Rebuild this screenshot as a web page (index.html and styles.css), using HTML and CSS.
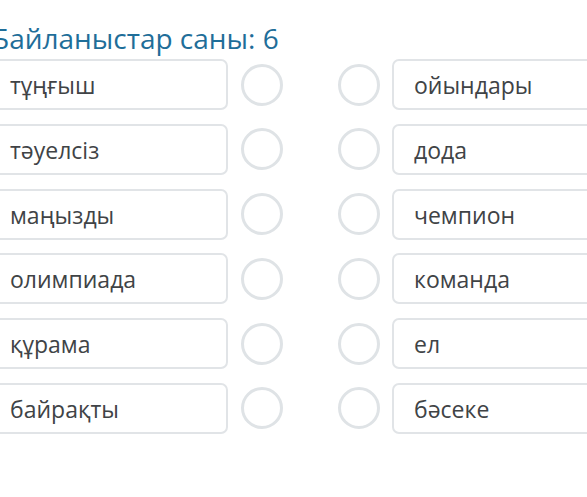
FILE: index.html
```html
<!DOCTYPE html>
<html lang="kk">
<head>
<meta charset="utf-8">
<link rel="stylesheet" href="styles.css">
</head>
<body>
<div class="page">
  <h1 class="title">Байланыстар саны: 6</h1>
  <div class="rows">
    <div class="row"><div class="box">тұңғыш</div><span class="dot"></span><span class="dot"></span><div class="box">ойындары</div></div>
    <div class="row"><div class="box">тәуелсіз</div><span class="dot"></span><span class="dot"></span><div class="box">дода</div></div>
    <div class="row"><div class="box">маңызды</div><span class="dot"></span><span class="dot"></span><div class="box">чемпион</div></div>
    <div class="row"><div class="box">олимпиада</div><span class="dot"></span><span class="dot"></span><div class="box">команда</div></div>
    <div class="row"><div class="box">құрама</div><span class="dot"></span><span class="dot"></span><div class="box">ел</div></div>
    <div class="row"><div class="box">байрақты</div><span class="dot"></span><span class="dot"></span><div class="box">бәсеке</div></div>
  </div>
</div>
</body>
</html>
```
FILE: styles.css
```css
html, body {
  margin: 0;
  padding: 0;
  background: #ffffff;
  overflow: hidden;
}
body {
  font-family: "Open Sans", "Noto Sans", sans-serif;
  color: #3f4245;
}
.page {
  margin-left: -12px;
  width: 660px;
}
.title {
  margin: 0;
  padding: 18px 0 0 4px;
  font-size: 28px;
  font-weight: 400;
  line-height: 40px;
  color: #1f6e99;
  height: 41px;
}
.rows {
  display: flex;
  flex-direction: column;
  gap: 13.8px;
}
.row {
  display: flex;
  align-items: center;
  height: 51px;
}
.box {
  box-sizing: border-box;
  width: 240px;
  height: 51px;
  border: 2px solid #e1e4e7;
  border-radius: 7px;
  padding: 0 20px;
  font-size: 23px;
  line-height: 48px;
  color: #404346;
}
.dot {
  box-sizing: border-box;
  width: 42px;
  height: 42px;
  border: 3px solid #dfe3e6;
  border-radius: 50%;
  margin-left: 13px;
}
.dot + .dot {
  margin-left: 55px;
  margin-right: 12px;
}
```
